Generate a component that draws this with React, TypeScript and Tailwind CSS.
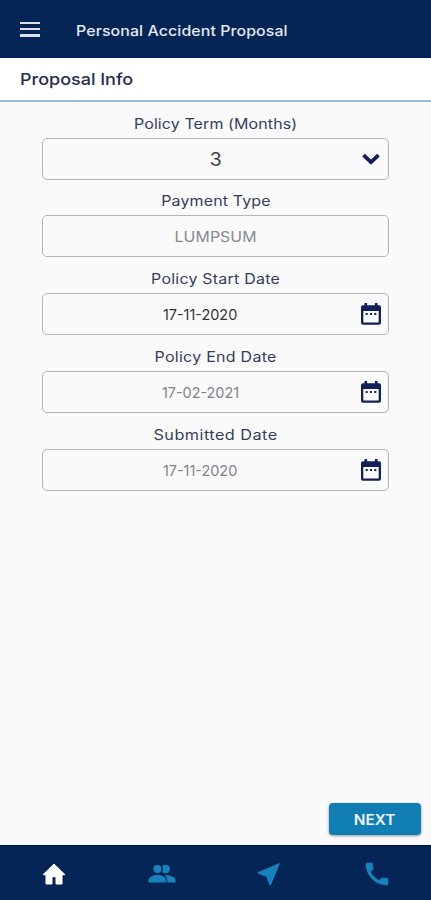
import type { ReactNode } from "react";
import { MdCall, MdNearMe } from "react-icons/md";

type FieldProps = {
  label: string;
  labelClass: string;
  value: string;
  valueClass: string;
  icon?: ReactNode;
};

function Field({ label, labelClass, value, valueClass, icon }: FieldProps) {
  return (
    <div className="flex h-[77.75px] flex-col">
      <div className="flex h-[29px] items-center justify-center pt-[1px]">
        <label className={`whitespace-nowrap text-[14px] leading-5 text-[#333d5c] ${labelClass}`}>{label}</label>
      </div>
      <div className="flex h-[42px] items-center rounded-[5px] border border-[#b3b4b8] pr-[4px]">
        <div className="flex flex-1 justify-center pt-[2px]">
          <span className={`whitespace-nowrap leading-5 ${valueClass}`}>{value}</span>
        </div>
        {icon}
      </div>
    </div>
  );
}

function CalendarIcon() {
  return (
    <svg width="26" height="26" viewBox="0 0 26 26" fill="#11205a">
      <path
        fillRule="evenodd"
        d="M6.5 2h2.6v2.2h7.8V2h2.6v2.2h1.500a2 2 0 0 1 2 2v15.600a2 2 0 0 1-2 2H5a2 2 0 0 1-2-2V6.200a2 2 0 0 1 2-2h1.500zM5.300 10v11.600h15.400V10z"
      />
      <path d="M7.700 12h2v2h-2zM12 12h2v2h-2zM16.300 12h2v2h-2z" />
    </svg>
  );
}

export default function App() {
  return (
    <div className="flex h-[900px] w-[431px] flex-col overflow-hidden bg-[#fafafb] font-['Inter','Noto_Sans',sans-serif]">
      <header className="flex h-[58px] shrink-0 items-center border-b border-[#06164a] bg-[#042555] pl-5">
        <div className="mt-[1px] flex h-[15px] w-[20px] flex-col justify-between">
          <i className="h-[2.5px] bg-[#dce1ed]" />
          <i className="h-[2.5px] bg-[#dce1ed]" />
          <i className="h-[2.5px] bg-[#dce1ed]" />
        </div>
        <h1 className="ml-[36px] mt-[4px] origin-left scale-x-[1.095] whitespace-nowrap text-[14.5px] font-medium leading-5 tracking-[0.1px] text-[#e5eaf3]">Personal Accident Proposal</h1>
      </header>
      <div className="flex h-[44px] shrink-0 items-center border-b-2 border-[#91bdd6] bg-white pl-5">
        <h2 className="origin-left scale-x-[1.09] whitespace-nowrap text-[16.5px] font-medium leading-6 text-[#252c50]">Proposal Info</h2>
      </div>
      <main className="flex flex-1 flex-col pl-[42px] pr-[42px] pt-[6.5px]">
        <Field
          label="Policy Term (Months)"
          labelClass="scale-x-[1.14] tracking-[0.1px]"
          value="3"
          valueClass="text-[18px] text-[#3b3c42] pl-[29px] scale-x-[1.08]"
          icon={
            <svg width="26" height="20" viewBox="0 0 26 20" fill="none" stroke="#151d55" strokeWidth="3.8">
              <path d="M5.5 6.2 13 13.2l7.5-7" strokeLinejoin="miter" />
            </svg>
          }
        />
        <Field label="Payment Type" labelClass="scale-x-[1.14] tracking-[0.12px]" value="LUMPSUM" valueClass="text-[14px] scale-x-[1.13] tracking-[0.1px] text-[#858991] pl-[4px]" />
        <Field label="Policy Start Date" labelClass="scale-x-[1.14] tracking-[0.2px]" value="17-11-2020" valueClass="text-[14px] scale-x-[1.03] text-[#333439]" icon={<CalendarIcon />} />
        <Field label="Policy End Date" labelClass="scale-x-[1.14] tracking-[0.25px]" value="17-02-2021" valueClass="text-[14px] scale-x-[1.03] text-[#7f838c]" icon={<CalendarIcon />} />
        <Field label="Submitted Date" labelClass="scale-x-[1.16] tracking-[0.4px]" value="17-11-2020" valueClass="text-[14px] scale-x-[1.03] text-[#7f838c]" icon={<CalendarIcon />} />
      </main>
      <div className="flex shrink-0 justify-end pb-[10px] pr-[10px]">
        <button className="flex h-[32px] w-[92px] items-center justify-center rounded-[4px] bg-[#107db5] pt-[2px] text-[14.5px] font-semibold leading-5 text-[#eef8fd] shadow-[0_1px_3px_rgba(0,0,0,0.4)]">
          <span className="scale-x-[1.06]">NEXT</span>
        </button>
      </div>
      <nav className="flex h-[55px] shrink-0 items-center border-t border-[#06164a] bg-[#042555] pt-[2px] text-[#1683bd]">
        <div className="flex flex-1 justify-center">
          <svg width="24" height="22" viewBox="0 0 24 22" fill="#ffffff" stroke="#ffffff" strokeWidth="1" strokeLinejoin="round">
            <path d="M12 1 1 11.7h3V21h6v-7.3h4V21h6v-9.3h3z" />
          </svg>
        </div>
        <div className="flex flex-1 justify-center">
          <svg width="28" height="18" viewBox="0 0 28 18" fill="currentColor">
            <circle cx="9.4" cy="4" r="4" />
            <path d="M14.2 1.1A4.200 4.200 0 0 1 18.800.1a4 4 0 0 1 0 7.800 4.200 4.200 0 0 1-4.600-1 5.500 5.500 0 0 0 0-5.800z" />
            <path d="M.5 17.500v-2C.5 12 5 10 9.400 10s8.600 2 8.600 5.500v2z" />
            <path d="M19.200 17.500v-2c0-2.400-1-4-2.900-5.400 5.500 0 11.200 1.600 11.200 5.400v2z" />
          </svg>
        </div>
        <div className="flex flex-1 justify-center"><MdNearMe size={30} /></div>
        <div className="flex flex-1 justify-center"><MdCall size={30} /></div>
      </nav>
    </div>
  );
}
